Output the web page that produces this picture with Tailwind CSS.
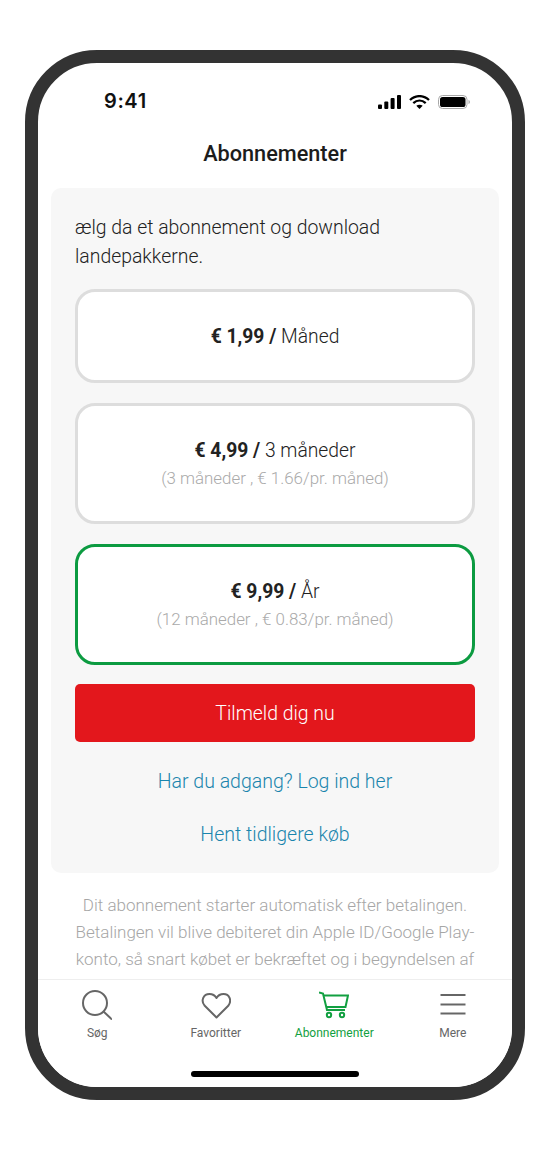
<!DOCTYPE html>
<html lang="en">
<head>
  <meta charset="UTF-8">
  <meta name="viewport" content="width=device-width, initial-scale=1.0">
  <title>Abonnementer</title>
  <script src="https://cdn.jsdelivr.net/npm/@tailwindcss/browser@4"></script>
</head>
<body class="bg-white font-['Roboto',sans-serif]">
  <div class="pt-[50px] pl-[25px]">
    <!-- Phone frame -->
    <div class="w-[500px] h-[1050px] border-[13px] border-[#333333] rounded-[72px] bg-white overflow-hidden flex flex-col">

      <!-- Status bar -->
      <div class="h-[66px] shrink-0 flex items-end justify-between pl-[66px] pr-[42px] pb-[16px]">
        <span class="font-['Inter',sans-serif] font-semibold text-[20px] leading-[24px] tracking-[0.6px] text-[#111111]">9:41</span>
        <div class="flex items-center gap-[8px] mb-[4px]">
          <svg width="23" height="14" viewBox="0 0 23 14" fill="#000000">
            <rect x="0" y="9.5" width="4" height="4.5" rx="1"/>
            <rect x="6.3" y="6.5" width="4" height="7.5" rx="1"/>
            <rect x="12.6" y="3" width="4" height="11" rx="1"/>
            <rect x="19" y="0" width="4" height="14" rx="1"/>
          </svg>
          <svg width="21" height="14" viewBox="0 0 21 14" fill="none" stroke="#000000" stroke-width="2.3">
            <path d="M1 5 C6.5 -0.2 14.5 -0.2 20 5"/>
            <path d="M4.3 8.2 C8 4.8 13 4.8 16.7 8.2"/>
            <path d="M10.5 14 L7.3 10.8 C9.2 9.3 11.8 9.3 13.7 10.8 Z" fill="#000000" stroke="none"/>
          </svg>
          <svg width="32" height="14" viewBox="0 0 32 14" fill="none">
            <rect x="0.5" y="0.5" width="28.5" height="13" rx="4" stroke="#a8a8a8"/>
            <rect x="2" y="2" width="25.5" height="10" rx="2.6" fill="#000000"/>
            <path d="M30.5 5 C31.5 5.4 31.9 6 31.9 7 C31.9 8 31.5 8.6 30.5 9 Z" fill="#a8a8a8"/>
          </svg>
        </div>
      </div>

      <!-- Title -->
      <h1 class="h-[59px] shrink-0 pb-[8px] flex items-center justify-center font-medium text-[21.7px] text-[#1c1c1c]">Abonnementer</h1>

      <!-- Scrolling content -->
      <div class="flex-1 min-h-0 overflow-hidden px-[13px]">
        <div class="bg-[#f7f7f7] rounded-[10px] px-[24px] pt-[25px] h-[685px]">
          <p class="text-[19.4px] leading-[29px] font-light text-[#222222]">ælg da et abonnement og download landepakkerne.</p>

          <div class="mt-[18px] flex flex-col gap-[20px]">
            <div class="h-[94px] pt-[2px] bg-white border-[3px] border-[#dddddd] rounded-[20px] flex items-center justify-center text-[19.3px] text-[#222222]">
              <p class="font-light"><span class="font-bold">€ 1,99 /</span> Måned</p>
            </div>
            <div class="h-[121px] bg-white border-[3px] border-[#dddddd] rounded-[20px] flex flex-col items-center justify-center text-[#222222]">
              <p class="text-[19.3px] leading-[28px] font-light"><span class="font-bold">€ 4,99 /</span> 3 måneder</p>
              <p class="text-[16.9px] leading-[26px] font-light text-[#aaaaaa]">(3 måneder , € 1.66/pr. måned)</p>
            </div>
            <div class="h-[121px] bg-white border-[3px] border-[#0c9b41] rounded-[20px] flex flex-col items-center justify-center text-[#222222]">
              <p class="text-[19.3px] leading-[28px] font-light"><span class="font-bold">€ 9,99 /</span> År</p>
              <p class="text-[16.9px] leading-[26px] font-light text-[#aaaaaa]">(12 måneder , € 0.83/pr. måned)</p>
            </div>
          </div>

          <button class="mt-[19px] w-full h-[58px] pt-[2px] bg-[#e3171c] rounded-[5px] text-white text-[19.4px] font-light">Tilmeld dig nu</button>

          <div class="mt-[25px] flex flex-col gap-[24px] items-center text-[19.5px] leading-[29px] font-light text-[#1a85ad]">
            <a>Har du adgang? Log ind her</a>
            <a>Hent tidligere køb</a>
          </div>
        </div>

        <p class="mt-[19px] px-[24px] text-center text-[17px] leading-[27px] font-light text-[#a6a6a6]">Dit abonnement starter automatisk efter betalingen. Betalingen vil blive debiteret din Apple ID/Google Play-konto, så snart købet er bekræftet og i begyndelsen af hver ny periode. Abonnementet fornyes automatisk.</p>
      </div>

      <!-- Tab bar -->
      <div class="h-[108px] shrink-0 bg-white border-t border-[#eeeeee]">
        <div class="grid grid-cols-4 pt-[10px]">
          <div class="flex flex-col items-center text-[#666666]">
            <svg width="30" height="30" viewBox="0 0 30 30" fill="none" stroke="currentColor" stroke-width="2">
              <circle cx="13" cy="13" r="12"/>
              <path d="M21.5 21.5 L30 29.5"/>
            </svg>
            <span class="mt-[5px] text-[12px] leading-[16px]">Søg</span>
          </div>
          <div class="flex flex-col items-center text-[#666666]">
            <svg width="30" height="30" viewBox="0 0 30 30" fill="none" stroke="currentColor" stroke-width="2" stroke-linejoin="round">
              <path d="M15.5 27.5 L3.5 15.5 C-0.5 10.5 2.5 4 8.5 4 C11.5 4 14 5.5 15.5 8 C17 5.5 19.5 4 22.5 4 C28.5 4 31 10.5 27.5 15.5 Z"/>
            </svg>
            <span class="mt-[5px] text-[12px] leading-[16px]">Favoritter</span>
          </div>
          <div class="flex flex-col items-center text-[#12a041]">
            <svg width="30" height="30" viewBox="0 0 30 30" fill="none" stroke="currentColor" stroke-width="2">
              <path d="M0 2.5 L4 3.5 L8 20 H26"/>
              <path d="M4.5 5.5 H29 L26.5 17 H7"/>
              <circle cx="10" cy="25" r="2.2"/>
              <circle cx="23" cy="25" r="2.2"/>
            </svg>
            <span class="mt-[5px] text-[12px] leading-[16px]">Abonnementer</span>
          </div>
          <div class="flex flex-col items-center text-[#666666]">
            <svg width="30" height="30" viewBox="0 0 30 30" fill="none" stroke="currentColor" stroke-width="2">
              <path d="M2.5 5 H27.5"/>
              <path d="M2.5 14.5 H27.5"/>
              <path d="M2.5 23.5 H27.5"/>
            </svg>
            <span class="mt-[5px] text-[12px] leading-[16px]">Mere</span>
          </div>
        </div>
        <div class="mt-[30px] mx-auto w-[168px] h-[6px] rounded-full bg-black"></div>
      </div>
    </div>
  </div>
</body>
</html>
